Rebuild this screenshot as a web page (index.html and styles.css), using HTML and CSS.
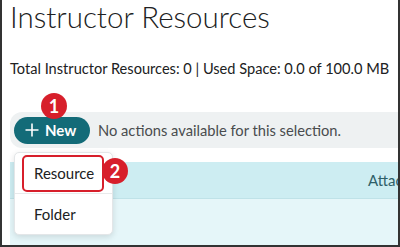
FILE: index.html
```html
<!DOCTYPE html>
<html>
<head>
<meta charset="utf-8">
<link rel="stylesheet" href="styles.css">
</head>
<body>
<div class="frame">
  <h1 class="title">Instructor Resources</h1>
  <p class="stats">Total Instructor Resources: 0 | Used Space: 0.0 of 100.0 MB</p>
  <div class="toolbar">
    <button class="new-btn">
      <svg class="plus" width="14" height="14" viewBox="0 0 14 14"><path d="M7 0.5V13.5M0.5 7H13.5" stroke="#fff" stroke-width="1.6" fill="none"/></svg>
      <span>New</span>
    </button>
    <span class="no-actions">No actions available for this selection.</span>
    <span class="badge badge-1">1</span>
  </div>
  <div class="table">
    <div class="thead"><span class="th">Attachments</span></div>
    <div class="tbody"></div>
  </div>
  <div class="menu">
    <div class="menu-item">Resource</div>
    <div class="menu-item">Folder</div>
  </div>
  <div class="highlight"></div>
  <span class="badge badge-2">2</span>
</div>
</body>
</html>
```
FILE: styles.css
```css
html, body {
  margin: 0;
  padding: 0;
  background: #fff;
}
.frame {
  position: relative;
  width: 400px;
  height: 247px;
  box-sizing: border-box;
  border-left: 2px solid #333;
  border-right: 2px solid #333;
  border-bottom: 2px solid #333;
  padding-left: 8px;
  overflow: hidden;
  font-family: Lato, "Noto Sans", sans-serif;
  color: #494c4e;
}
.title {
  margin: 0;
  font-size: 29.5px;
  font-weight: 300;
  line-height: 34px;
  color: #202122;
  white-space: nowrap;
}
.stats {
  margin: 25px 0 0;
  font-size: 14.6px;
  line-height: 20px;
  color: #202122;
  white-space: nowrap;
}
.toolbar {
  position: relative;
  margin-top: 33px;
  height: 36px;
  background: #eef1f2;
  border-radius: 12px 0 0 12px;
  display: flex;
  align-items: center;
  padding-left: 4px;
  margin-right: -10px;
}
.new-btn {
  display: flex;
  align-items: center;
  gap: 6px;
  height: 27px;
  width: 76px;
  padding: 0 0 0 11px;
  border: none;
  border-radius: 14px;
  background: #136b78;
  color: #fff;
  font-family: inherit;
  font-size: 15px;
  font-weight: 700;
  box-sizing: border-box;
}
.no-actions {
  margin-left: 8px;
  font-size: 14.7px;
  color: #494c4e;
  white-space: nowrap;
}
.table {
  margin-top: 14px;
  margin-right: -10px;
}
.thead {
  height: 36px;
  background: #cdedf2;
  border-bottom: 1px solid #bfe2e8;
  display: flex;
  align-items: center;
  padding-left: 358px;
}
.th {
  font-size: 15px;
  color: #2f5f68;
  white-space: nowrap;
}
.tbody {
  height: 60px;
  background: #e5f6f9;
}
.badge {
  position: absolute;
  width: 26px;
  height: 26px;
  border-radius: 50%;
  background: #d71f2b;
  color: #fff;
  font-weight: 700;
  font-size: 18px;
  line-height: 26px;
  text-align: center;
}
.badge-1 {
  left: 31px;
  top: -19px;
}
.badge-2 {
  left: 100px;
  top: 158px;
}
.menu {
  position: absolute;
  left: 12px;
  top: 152px;
  width: 99px;
  height: 83px;
  background: #fff;
  border: 1px solid #e3e6e8;
  border-radius: 5px;
  box-shadow: 0 2px 6px rgba(0,0,0,0.12);
  box-sizing: border-box;
  display: flex;
  flex-direction: column;
}
.menu-item {
  flex: 1;
  display: flex;
  align-items: center;
  padding-left: 19px;
  font-size: 15px;
  color: #202122;
}
.menu-item + .menu-item {
  border-top: 1px solid #e8eaeb;
}
.highlight {
  position: absolute;
  left: 20px;
  top: 155px;
  width: 82px;
  height: 37px;
  box-sizing: border-box;
  border: 2px solid #d71f2b;
  border-radius: 5px;
}
```
